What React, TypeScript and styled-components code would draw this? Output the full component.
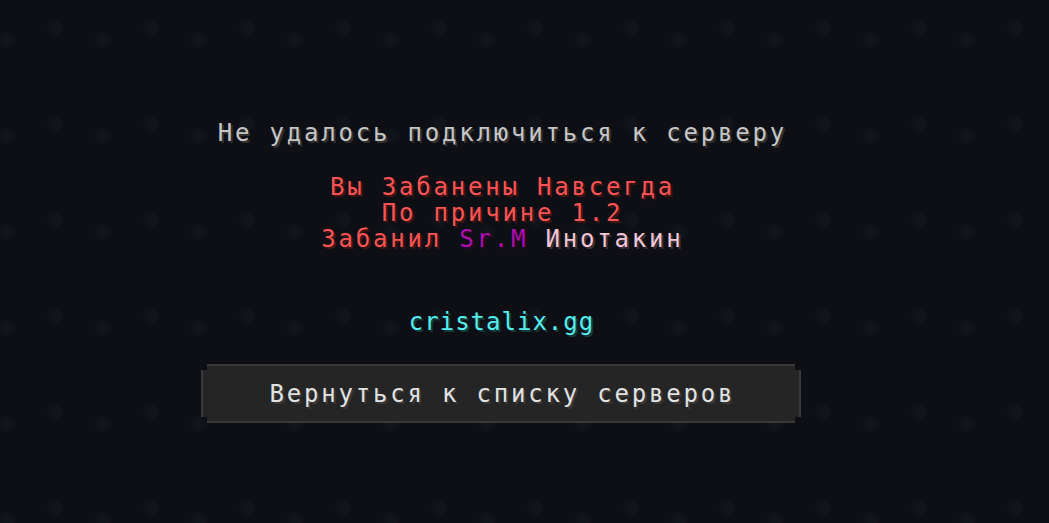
import styled, { createGlobalStyle } from 'styled-components';

const GlobalStyle = createGlobalStyle`
  html, body {
    margin: 0;
    padding: 0;
    height: 100%;
    background: #0e0f14;
  }
  #root {
    height: 100%;
  }
`;

const Screen = styled.div`
  width: 100vw;
  height: 100vh;
  overflow: hidden;
  box-sizing: border-box;
  padding: 120px 47px 0 0;
  display: flex;
  flex-direction: column;
  align-items: center;
  background-color: #0e0f14;
  background-image:
    radial-gradient(circle at center, #11141b 0 5px, transparent 9px),
    radial-gradient(circle at center, #10141b 0 5px, transparent 9px);
  background-size: 96px 96px, 96px 96px;
  background-position: 7px -20px, 55px -8px;
  font-family: 'DejaVu Sans Mono', 'Liberation Mono', monospace;
  font-size: 24px;
  letter-spacing: 2.8px;
  line-height: 26px;
`;

const Line = styled.div<{ $color: string; $shadow: string }>`
  color: ${(p) => p.$color};
  text-shadow: 2px 2px 0 ${(p) => p.$shadow};
  white-space: nowrap;
  text-align: center;
  margin-right: -2.8px;
`;

const Reason = styled.div`
  margin-top: 28px;
  display: flex;
  flex-direction: column;
  align-items: center;
`;

const Part = styled.span<{ $color: string; $shadow: string }>`
  color: ${(p) => p.$color};
  text-shadow: 2px 2px 0 ${(p) => p.$shadow};
`;

const Site = styled(Line)`
  margin-top: 57px;
  letter-spacing: 1px;
  margin-right: -1px;
`;

const notch = (n: number) => `polygon(
  0 ${n}px, ${n}px ${n}px, ${n}px 0,
  calc(100% - ${n}px) 0, calc(100% - ${n}px) ${n}px, 100% ${n}px,
  100% calc(100% - ${n}px), calc(100% - ${n}px) calc(100% - ${n}px), calc(100% - ${n}px) 100%,
  ${n}px 100%, ${n}px calc(100% - ${n}px), 0 calc(100% - ${n}px)
)`;

const Button = styled.button`
  position: relative;
  margin-top: 29px;
  width: 600px;
  height: 59px;
  border: none;
  padding: 0;
  background: #393939;
  clip-path: ${notch(6)};
  font: inherit;
  letter-spacing: inherit;
  color: #e2e2e2;
  text-shadow: 2px 2px 0 #383838;
  cursor: pointer;
  display: flex;
  align-items: center;
  justify-content: center;
  &::before {
    content: '';
    position: absolute;
    inset: 2px;
    background: #252525;
    clip-path: ${notch(4)};
  }
  & > span {
    position: relative;
    margin-right: -2.8px;
    margin-top: 1px;
  }
`;

export default function App() {
  return (
    <>
      <GlobalStyle />
      <Screen>
        <Line $color="#c6c6c6" $shadow="#313131">
          Не удалось подключиться к серверу
        </Line>
        <Reason>
          <Line $color="#fc5454" $shadow="#3f1515">
            Вы Забанены Навсегда
          </Line>
          <Line $color="#fc5454" $shadow="#3f1515">
            По причине 1.2
          </Line>
          <Line $color="#fc5454" $shadow="#3f1515">
            Забанил <Part $color="#ad0fad" $shadow="#2b042b">Sr.M</Part>{' '}
            <Part $color="#f3c6d8" $shadow="#3c3136">Инотакин</Part>
          </Line>
        </Reason>
        <Site $color="#55eeee" $shadow="#153b3b">
          cristalix.gg
        </Site>
        <Button>
          <span>Вернуться к списку серверов</span>
        </Button>
      </Screen>
    </>
  );
}
